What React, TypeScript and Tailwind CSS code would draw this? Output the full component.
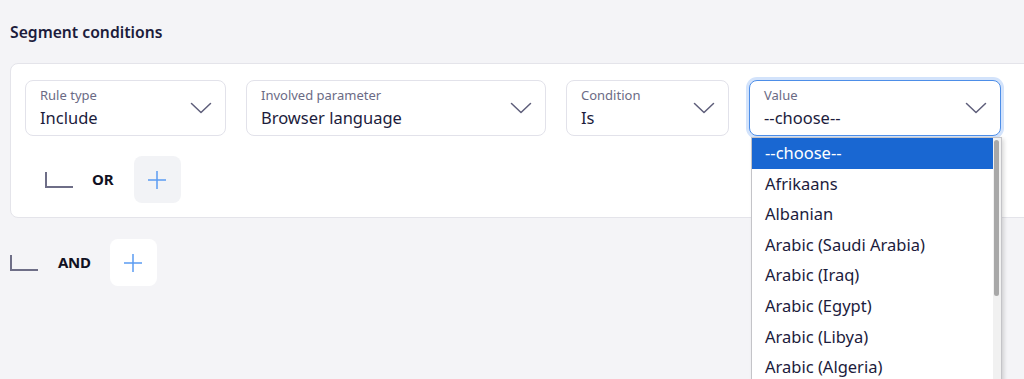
import { useState } from "react";

const languages = [
  "--choose--",
  "Afrikaans",
  "Albanian",
  "Arabic (Saudi Arabia)",
  "Arabic (Iraq)",
  "Arabic (Egypt)",
  "Arabic (Libya)",
  "Arabic (Algeria)",
  "Arabic (Morocco)",
];

function Chevron() {
  return (
    <svg width="22" height="12" viewBox="0 0 22 12" fill="none" className="shrink-0">
      <path d="M1.5 1.5 L11 10.5 L20.5 1.5" stroke="#5e5e7a" strokeWidth="1.5" strokeLinecap="round" strokeLinejoin="round" />
    </svg>
  );
}

function Plus() {
  return (
    <svg width="20" height="20" viewBox="0 0 20 20" fill="none">
      <path d="M10 1 V19 M1 10 H19" stroke="#5b9cf2" strokeWidth="1.5" />
    </svg>
  );
}

function Corner() {
  return <span className="block h-[16px] w-[28px] border-b-2 border-l-2 border-[#6e6e87]" />;
}

function SelectBox({
  label,
  value,
  width,
  focused,
}: {
  label: string;
  value: string;
  width: string;
  focused?: boolean;
}) {
  return (
    <div
      className={
        focused
          ? "relative flex h-[56px] shrink-0 items-center justify-between rounded-lg border border-[#4d8ee8] bg-white pl-[14px] pr-[13px] shadow-[0_0_0_3px_#d3e3fb] " + width
          : "relative flex h-[56px] shrink-0 items-center justify-between rounded-lg border border-[#e2e2ea] bg-white pl-[14px] pr-[13px] " + width
      }
    >
      <div className="flex flex-col pt-[2px]">
        <span className="text-[13px] leading-4 text-[#6b6b85]">{label}</span>
        <span className="mt-[2px] text-[16.5px] leading-[26px] text-[#1c1c3c]">{value}</span>
      </div>
      <Chevron />
    </div>
  );
}

export default function App() {
  const [active] = useState(0);

  return (
    <div className="h-[379px] w-[1024px] overflow-hidden bg-[#f4f4f7] font-['Noto_Sans',sans-serif]">
      <div className="px-[10px] pt-[20px]">
        <h2 className="text-[15.7px] font-semibold leading-6 text-[#1c1c3c]">Segment conditions</h2>

        <div className="mt-[19px] w-[1040px] rounded-lg border border-[#e4e4ea] bg-white px-[14px] pb-[14px] pt-[16px]">
          <div className="flex gap-[20px]">
            <SelectBox label="Rule type" value="Include" width="w-[201px]" />
            <SelectBox label="Involved parameter" value="Browser language" width="w-[300px]" />
            <SelectBox label="Condition" value="Is" width="w-[163px]" />
            <div className="relative">
              <SelectBox label="Value" value="--choose--" width="w-[252px]" focused />
              <ul className="absolute left-[2px] top-[57px] z-10 h-[262px] w-[251px] overflow-hidden border border-[#c4c4c8] bg-white pr-[8px] shadow-[2px_2px_4px_rgba(0,0,0,0.15)]">
                {languages.map((lang, i) => (
                  <li
                    key={lang}
                    className={
                      i === active
                        ? "h-[30.6px] bg-[#1967d2] pl-[13px] text-[16.5px] leading-[30.6px] text-white"
                        : "h-[30.6px] pl-[13px] text-[16.5px] leading-[30.6px] text-[#1c1c3c]"
                    }
                  >
                    {lang}
                  </li>
                ))}
                <span className="absolute right-0 top-0 h-full w-[8px] bg-[#f1f1f1]" />
                <span className="absolute right-[2px] top-[2px] h-[156px] w-[5px] rounded-full bg-[#a8a8a8]" />
              </ul>
            </div>
          </div>

          <div className="mt-[20px] flex items-center pl-[20px]">
            <Corner />
            <span className="ml-[19px] text-[15px] font-bold text-[#111122]">OR</span>
            <button className="ml-[20px] grid size-[47px] place-items-center rounded-lg bg-[#f2f3f6]">
              <Plus />
            </button>
          </div>
        </div>

        <div className="mt-[21px] flex items-center">
          <Corner />
          <span className="ml-[20px] text-[15px] font-bold tracking-[-0.3px] text-[#111122]">AND</span>
          <button className="ml-[19px] grid size-[47px] place-items-center rounded-lg bg-white">
            <Plus />
          </button>
        </div>
      </div>
    </div>
  );
}
